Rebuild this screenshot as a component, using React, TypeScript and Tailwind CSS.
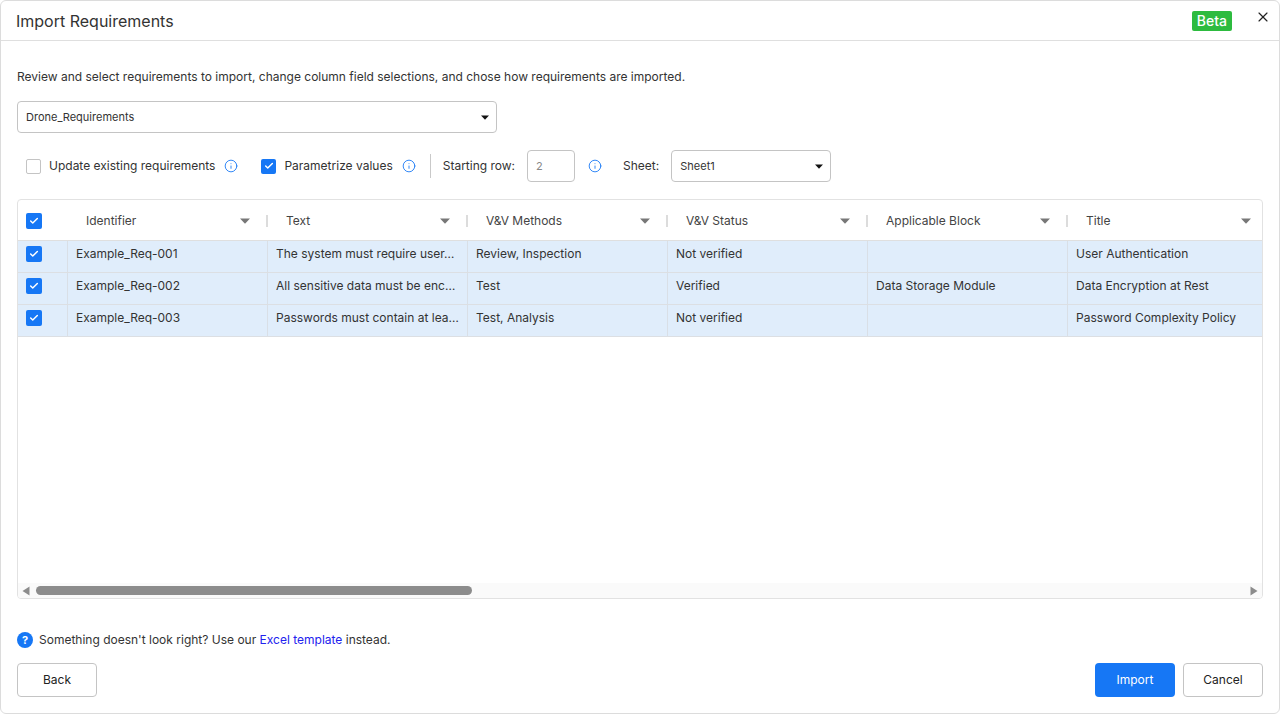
import { Check, Info, X } from "lucide-react";

const columns = ["Identifier", "Text", "V&V Methods", "V&V Status", "Applicable Block", "Title"];

const rows = [
  ["Example_Req-001", "The system must require user…", "Review, Inspection", "Not verified", "", "User Authentication"],
  ["Example_Req-002", "All sensitive data must be enc…", "Test", "Verified", "Data Storage Module", "Data Encryption at Rest"],
  ["Example_Req-003", "Passwords must contain at lea…", "Test, Analysis", "Not verified", "", "Password Complexity Policy"],
];

function Box({ checked = true, size = "h-4 w-4" }: { checked?: boolean; size?: string }) {
  return checked ? (
    <span className={`flex ${size} shrink-0 items-center justify-center rounded-[2px] bg-[#1677f5]`}>
      <Check size={10} strokeWidth={3.5} color="white" />
    </span>
  ) : (
    <span className={`block ${size} shrink-0 rounded-[2px] border border-[#c4c4c4] bg-white`} />
  );
}

function Hint() {
  return <Info size={14} strokeWidth={1.5} className="shrink-0 text-[#1677f5]" />;
}

function Caret({ color = "#111", w = 8, h = 5 }: { color?: string; w?: number; h?: number }) {
  return (
    <svg width={w} height={h} viewBox="0 0 8 5" preserveAspectRatio="none" className="shrink-0">
      <path d="M0 0.5h8L4 4.8z" fill={color} />
    </svg>
  );
}

export default function App() {
  return (
    <div className="flex h-[714px] w-[1280px] flex-col overflow-hidden rounded-[6px] border border-[#dcdcdc] bg-white font-['Inter',sans-serif] text-[#333]">
      <header className="flex h-[40px] shrink-0 items-center border-b border-[#dfdfdf] pl-[15px] pr-[8px]">
        <h1 className="text-[16px] leading-none text-[#333]">Import Requirements</h1>
        <span className="ml-auto mt-[1px] rounded-[2px] bg-[#2dbb3f] px-[5px] py-[1px] text-[14px] font-medium leading-[18px] text-white">Beta</span>
        <X size={16} strokeWidth={1.75} className="mb-[7px] ml-[23px] text-[#222]" />
      </header>

      <main className="flex min-h-0 flex-1 flex-col px-[16px]">
        <p className="mt-[28px] text-[12px] leading-[16px]">Review and select requirements to import, change column field selections, and chose how requirements are imported.</p>

        <div className="mt-[16px] flex h-[32px] w-[480px] items-center justify-between rounded-[4px] border border-[#c4c4c4] pl-[8px] pr-[7px] text-[11px]">
          <span>Drone_Requirements</span>
          <Caret />
        </div>

        <div className="mt-[17px] flex h-[32px] items-center text-[12px]">
          <span className="ml-[9px]"><Box checked={false} size="h-[15px] w-[15px]" /></span>
          <span className="ml-[8px]">Update existing requirements</span>
          <span className="ml-[9px]"><Hint /></span>
          <span className="ml-[23px]"><Box size="h-[15px] w-[15px]" /></span>
          <span className="ml-[8px]">Parametrize values</span>
          <span className="ml-[9px]"><Hint /></span>
          <span className="ml-[14px] h-[24px] w-px bg-[#c9c9c9]" />
          <span className="ml-[12px]">Starting row:</span>
          <span className="ml-[12px] flex h-[32px] w-[48px] items-center rounded-[4px] border border-[#c4c4c4] pl-[8px] text-[11px] text-[#888]">2</span>
          <span className="ml-[13px]"><Hint /></span>
          <span className="ml-[21px]">Sheet:</span>
          <span className="ml-[12px] flex h-[32px] w-[160px] items-center justify-between rounded-[4px] border border-[#c4c4c4] pl-[8px] pr-[7px] text-[11px]">
            Sheet1
            <Caret />
          </span>
        </div>

        <section className="mt-[17px] flex h-[400px] w-[1246px] flex-col overflow-hidden rounded-[4px] border border-[#e2e2e2]">
          <div className="flex h-[41px] shrink-0 border-b border-[#dfdfdf] pt-[1px]">
            <div className="flex w-[50px] shrink-0 items-center pl-[8px]"><Box /></div>
            {columns.map((name, i) => (
              <div key={name} className="flex w-[200px] shrink-0 items-center pl-[18px] pr-[17px] text-[12px] text-[#444]">
                <span>{name}</span>
                <span className="ml-auto"><Caret color="#777" w={10} h={6} /></span>
                {i < columns.length - 1 && <span className="ml-[16px] mr-[-17px] h-[12px] w-[2px] bg-[#dcdcdc]" />}
              </div>
            ))}
          </div>

          <div className="min-h-0 flex-1">
            {rows.map((row) => (
              <div key={row[0]} className="flex h-[32px] border-b border-[#dcdfe3] bg-[#e0edfb]">
                <div className="flex w-[50px] shrink-0 items-center border-r border-[#d9dfe6] pb-[5px] pl-[8px]"><Box /></div>
                {row.map((cell, i) => (
                  <div key={i} className={`flex w-[200px] shrink-0 items-center border-r border-[#d9dfe6] px-[8px] pb-[5px] text-[12px] ${i === 5 ? "border-r-0" : ""}`}>
                    <span className="whitespace-nowrap">{cell}</span>
                  </div>
                ))}
              </div>
            ))}
          </div>

          <div className="flex h-[15px] shrink-0 items-center bg-[#fafafa] pl-[4px] pr-[4px]">
            <svg width="8" height="10" viewBox="0 0 8 10"><path d="M7.5 0.5v9L0.5 5z" fill="#8c8c8c" /></svg>
            <span className="ml-[6px] h-[9px] w-[436px] rounded-full bg-[#8c8c8c]" />
            <svg width="8" height="10" viewBox="0 0 8 10" className="ml-auto"><path d="M0.5 0.5v9L7.5 5z" fill="#8c8c8c" /></svg>
          </div>
        </section>

        <div className="mt-[33px] flex items-center text-[12px] leading-[16px]">
          <span className="flex h-[16px] w-[16px] items-center justify-center rounded-full bg-[#1677f5] text-[11px] font-bold text-white">?</span>
          <span className="ml-[6px]">Something doesn't look right? Use our <a className="text-[#2222ee]">Excel template</a> instead.</span>
        </div>

        <footer className="mt-[15px] flex items-center gap-[8px] text-[12px]">
          <button className="mr-auto h-[34px] w-[80px] rounded-[4px] border border-[#c4c4c4] text-[#222]">Back</button>
          <button className="h-[34px] w-[80px] rounded-[4px] bg-[#1677f5] text-white">Import</button>
          <button className="h-[34px] w-[80px] rounded-[4px] border border-[#c4c4c4] text-[#222]">Cancel</button>
        </footer>
      </main>
    </div>
  );
}
